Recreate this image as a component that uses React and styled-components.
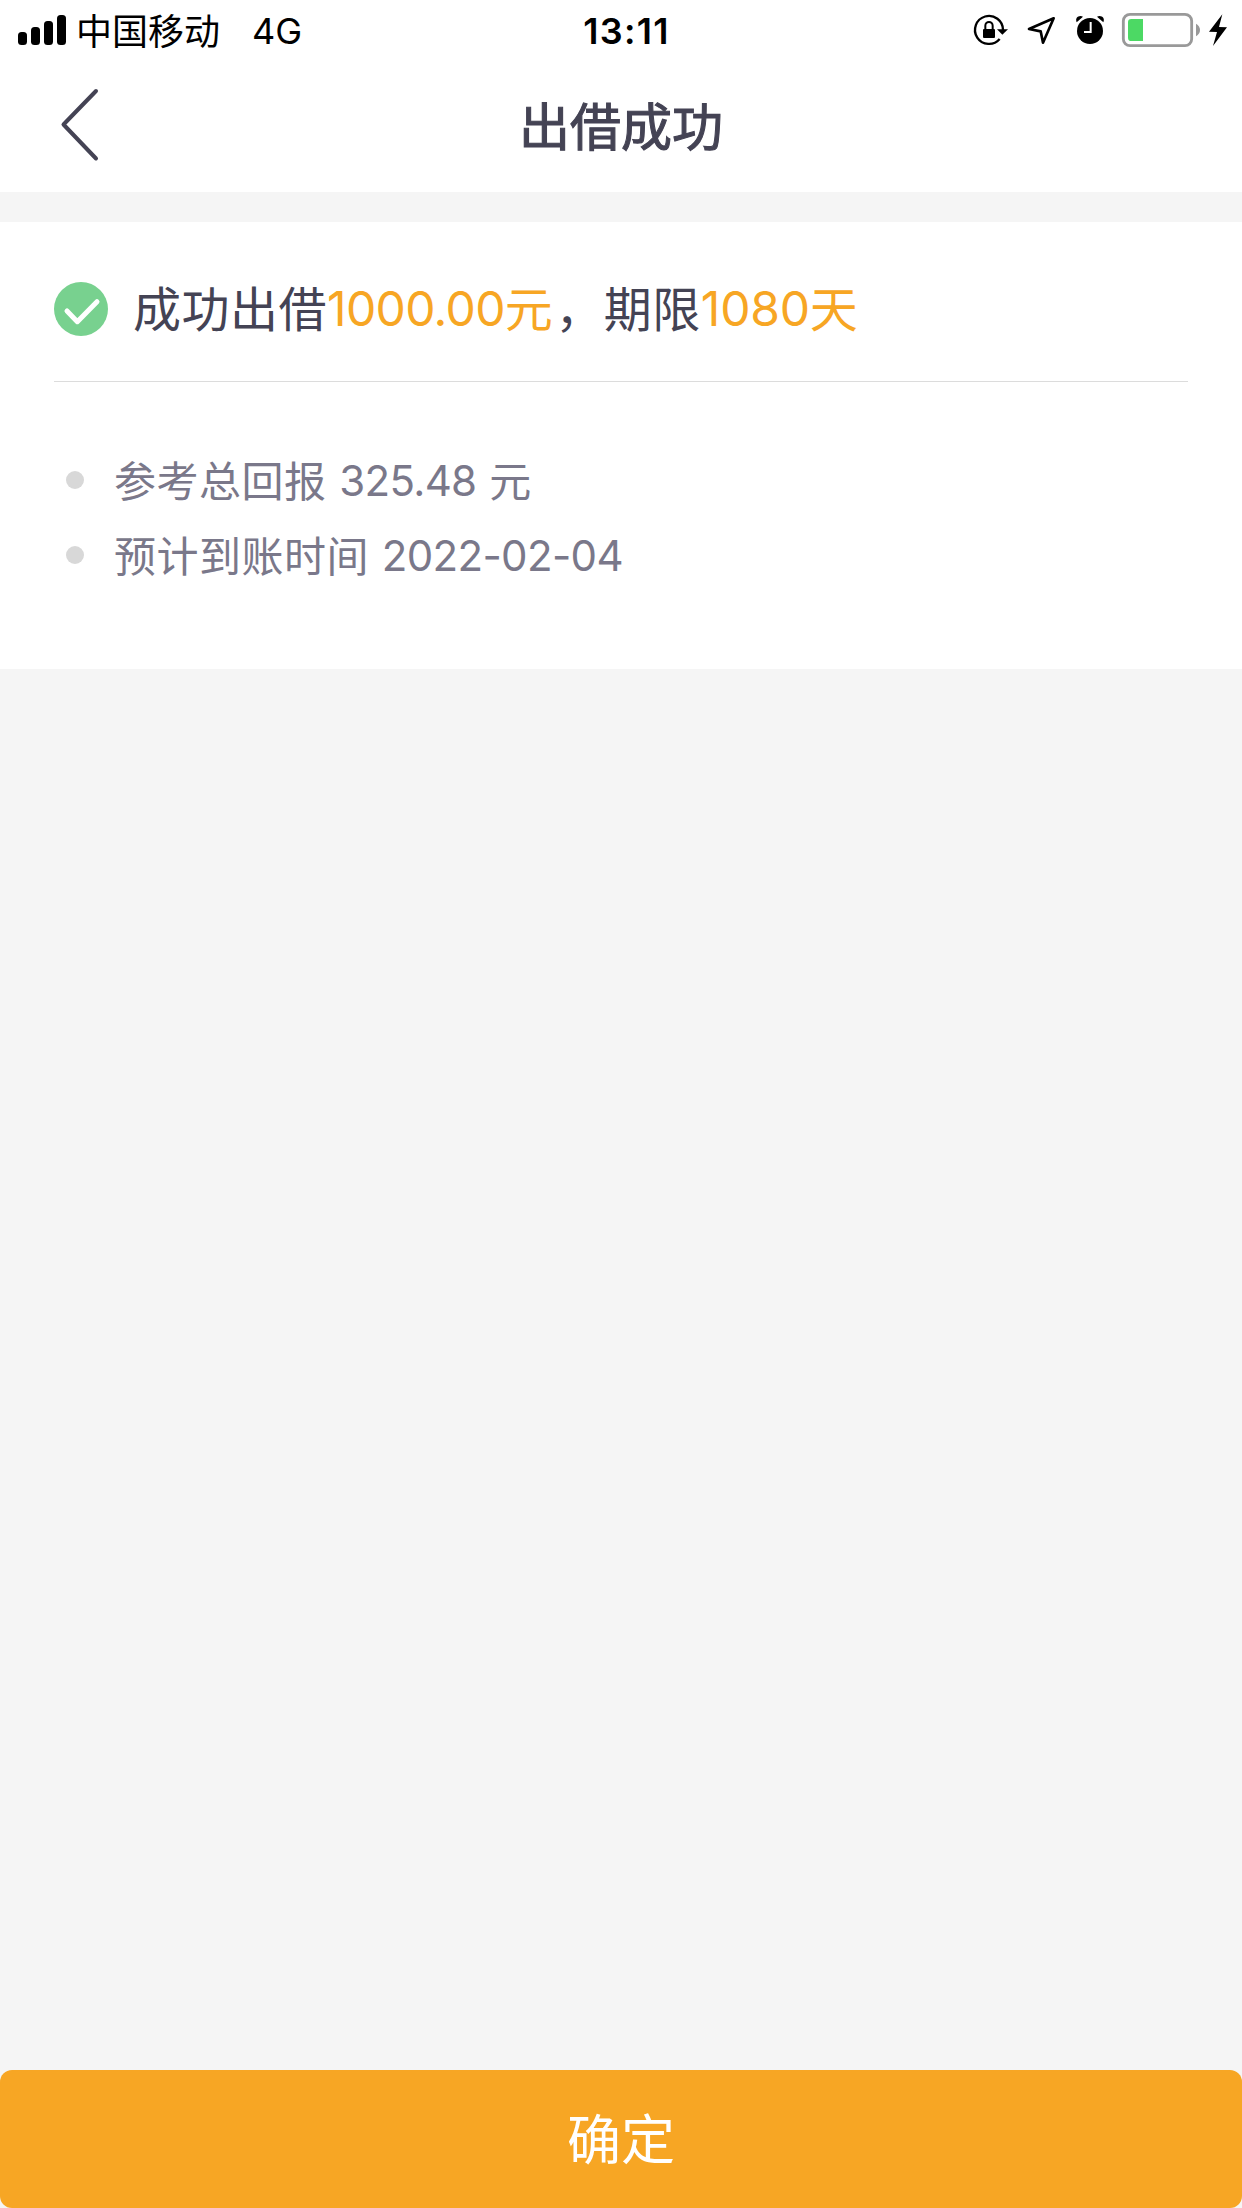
import React from 'react'
import styled, { createGlobalStyle } from 'styled-components';

const GlobalStyle = createGlobalStyle`
  * {
    box-sizing: border-box;
  }
  body {
    margin: 0;
    background: #f5f5f5;
    font-family: Inter, "Noto Sans CJK SC", sans-serif;
  }
`;

const Page = styled.div`
  display: flex;
  flex-direction: column;
  width: 1242px;
  height: 2208px;
  background: #f5f5f5;
  color: #444354;
`;

const StatusBar = styled.div`
  display: grid;
  grid-template-columns: 1fr auto 1fr;
  align-items: center;
  height: 60px;
  padding: 0 13px 0 18px;
  background: #fff;
  color: #000;
  font-size: 36px;
  line-height: 56px;
`;

const Signal = styled.div`
  display: flex;
  align-items: flex-end;
  gap: 4px;
  height: 30px;
  margin-right: 10px;
`;

const Bar = styled.span`
  width: 9px;
  height: ${props => props.$height}px;
  border-radius: 3.5px;
  background: #000;
`;

const Carrier = styled.div`
  display: flex;
  align-items: center;
`;

const CarrierName = styled.span`
  padding-top: 3px;
`;

const Network = styled.span`
  margin-left: 32px;
  padding-top: 2px;
`;

const Clock = styled.div`
  padding: 2px 0 0 6px;
  font-weight: 600;
  letter-spacing: 1.3px;
`;

const StatusIcons = styled.div`
  display: flex;
  justify-content: flex-end;
  align-items: center;
`;

const StatusIcon = styled.svg`
  flex: none;
  height: 36px;
  margin-left: ${props => props.$gap || 0}px;
`;

const NavBar = styled.div`
  display: grid;
  grid-template-columns: 1fr auto 1fr;
  align-items: center;
  height: 132px;
  padding: 0 58px;
  background: #fff;
`;

const BackIcon = styled.svg`
  width: 42px;
  height: 76px;
`;

const Title = styled.h1`
  margin: 0;
  padding-top: 3px;
  font-size: 51px;
  font-weight: 400;
  line-height: 76px;
  -webkit-text-stroke: 1.1px #444354;
`;

const Card = styled.section`
  height: 447px;
  margin-top: 30px;
  padding: 0 54px;
  background: #fff;
`;

const Summary = styled.div`
  display: flex;
  align-items: center;
  height: 160px;
  padding-top: 15px;
  border-bottom: 1px solid #dcdcdc;
  font-size: 48px;
  line-height: 60px;
`;

const CheckIcon = styled.svg`
  width: 54px;
  height: 54px;
  margin-right: 25px;
`;

// Han glyphs sit a little lower than the digits beside them
const Zh = styled.span`
  line-height: 1;
  letter-spacing: 0.5px;
  vertical-align: -1px;
`;

const Amount = styled.span`
  margin-right: 2px;
  color: #f7a624;
  letter-spacing: ${props => props.$spacing || -0.65}px;
`;

const Details = styled.ul`
  margin: 0;
  padding: 60.5px 0 0 12px;
  list-style: none;
`;

const Detail = styled.li`
  display: flex;
  align-items: center;
  height: 75px;
  color: #7a788a;
  font-size: 42px;
  line-height: 75px;
  letter-spacing: -0.65px;
  word-spacing: 1.5px;

  &::before {
    content: '';
    width: 18px;
    height: 18px;
    margin-right: 30px;
    border-radius: 50%;
    background: #d8d8d8;
  }
`;

const Confirm = styled.button`
  height: 138px;
  margin-top: auto;
  padding: 4px 0 0;
  border: none;
  border-radius: 12px;
  background: #f7a624;
  color: #fff;
  font-family: inherit;
  font-size: 54px;
  line-height: 134px;
`;

const RotationLock = () => (
  <StatusIcon width="38" viewBox="0 0 114 108">
    <path d="M83 81A42 42 0 1 1 93 54" fill="none" stroke="#000" strokeWidth="7" />
    <path d="M75 52H108L91 68Z" />
    <rect x="33" y="51" width="36" height="27" rx="3" />
    <path d="M40 53V41a11 11 0 0 1 22 0V53" fill="none" stroke="#000" strokeWidth="6" />
  </StatusIcon>
);

const Location = () => (
  <StatusIcon width="33" viewBox="0 0 99 108" $gap={15}>
    <path d="M86 19L12 51L47 58L54 92Z" fill="none" stroke="#000" strokeWidth="8" strokeLinejoin="round" />
  </StatusIcon>
);

const Alarm = () => (
  <StatusIcon width="32" viewBox="0 0 96 108" $gap={16}>
    <circle cx="48" cy="57" r="39" />
    <path d="M8 31C2 18 14 8 27 14Z" />
    <path d="M88 31C94 18 82 8 69 14Z" />
    <path d="M30 60H50V30" fill="none" stroke="#fff" strokeWidth="6" />
  </StatusIcon>
);

const Battery = () => (
  <StatusIcon width="82" viewBox="0 0 246 108" $gap={14}>
    <rect x="10" y="7" width="205" height="94" rx="20" fill="none" stroke="#999" strokeWidth="8.5" />
    <path d="M69 21V87H34a10 10 0 0 1 -10 -10V31a10 10 0 0 1 10 -10Z" fill="#4cd964" />
    <path d="M228 35Q240 42 240 54Q240 66 228 73Z" fill="#999" />
  </StatusIcon>
);

const Bolt = () => (
  <StatusIcon width="22" viewBox="0 0 66 108" $gap={5}>
    <path d="M46 7L6 59L30 60L18 102L60 46L36 45Z" />
  </StatusIcon>
);

export default function App() {
  return (
    <Page>
      <GlobalStyle />
      <StatusBar>
        <Carrier>
          <Signal>
            <Bar $height={13} />
            <Bar $height={18} />
            <Bar $height={24} />
            <Bar $height={30} />
          </Signal>
          <CarrierName>中国移动</CarrierName>
          <Network>4G</Network>
        </Carrier>
        <Clock>13:11</Clock>
        <StatusIcons>
          <RotationLock />
          <Location />
          <Alarm />
          <Battery />
          <Bolt />
        </StatusIcons>
      </StatusBar>

      <NavBar>
        <BackIcon viewBox="0 0 42 76">
          <path d="M38 3L5.500 36.500L38 70.500" fill="none" stroke="#444354" strokeWidth="4" strokeLinecap="round" strokeLinejoin="round" />
        </BackIcon>
        <Title>出借成功</Title>
      </NavBar>

      <Card>
        <Summary>
          <CheckIcon viewBox="0 0 162 162">
            <circle cx="81" cy="81" r="81" fill="#78d18f" />
            <path d="M39 87L70 119L129 59" fill="none" stroke="#fff" strokeWidth="15" strokeLinecap="round" strokeLinejoin="round" />
          </CheckIcon>
          <div>
            <Zh>成功出借</Zh>
            <Amount>1000.00<Zh>元</Zh></Amount>
            <Zh>，期限</Zh>
            <Amount $spacing={-0.2}>1080<Zh>天</Zh></Amount>
          </div>
        </Summary>
        <Details>
          <Detail>
            <div><Zh>参考总回报</Zh> 325.48 <Zh>元</Zh></div>
          </Detail>
          <Detail>
            <div><Zh>预计到账时间</Zh> 2022-02-04</div>
          </Detail>
        </Details>
      </Card>

      <Confirm>确定</Confirm>
    </Page>
  );
}
